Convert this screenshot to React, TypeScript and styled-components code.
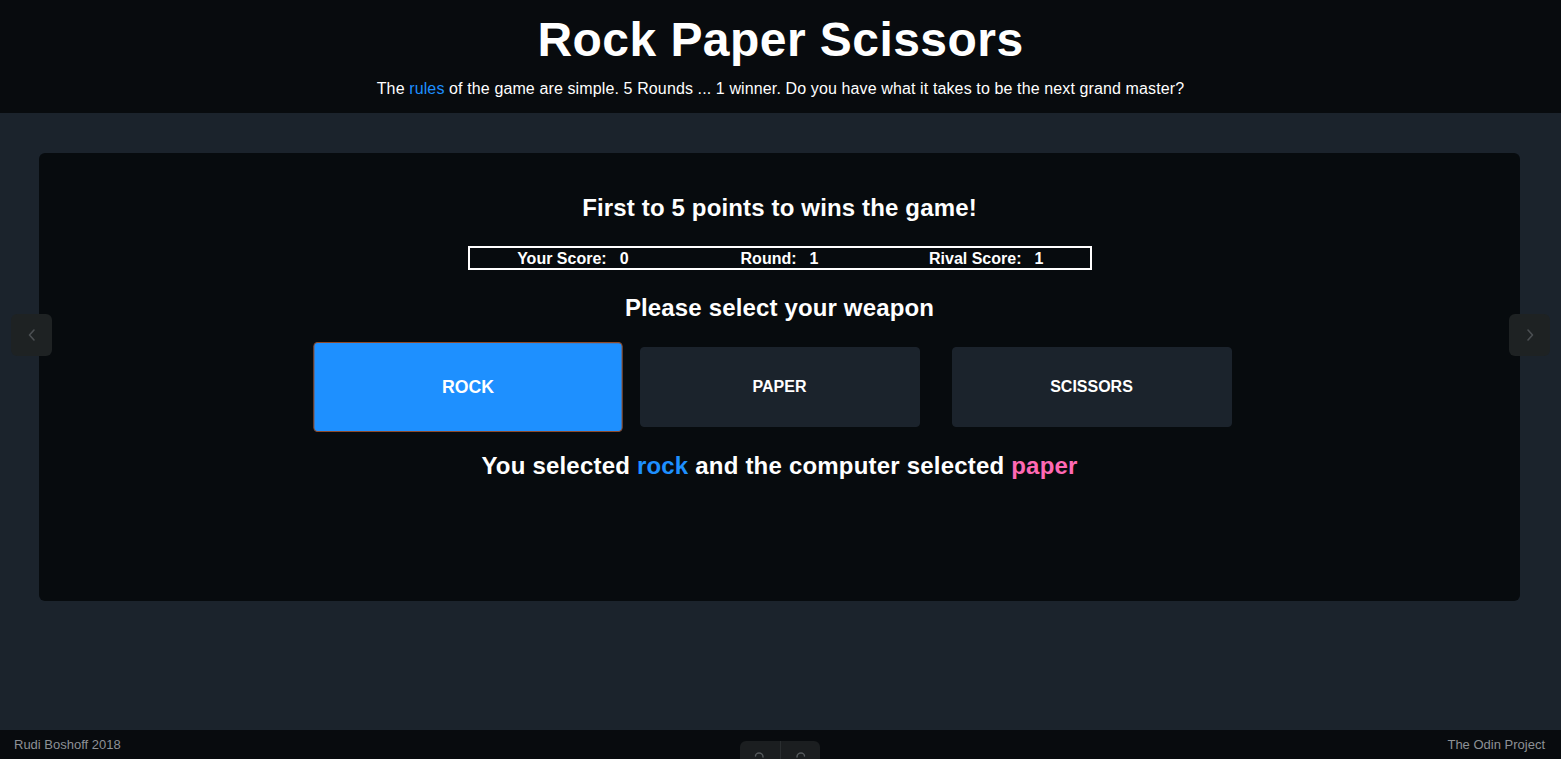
import React from "react";
import styled, { createGlobalStyle } from "styled-components";

const Global = createGlobalStyle`
  html, body { margin: 0; padding: 0; }
  body {
    background: #1b232c;
    font-family: "Liberation Sans", Arial, sans-serif;
    color: #ffffff;
  }
`;

const Page = styled.div`
  min-height: 100vh;
  display: flex;
  flex-direction: column;
  position: relative;
  overflow: hidden;
`;

const Header = styled.header`
  background: #080b0e;
  padding: 14px 0 14px;
  text-align: center;
`;

const Title = styled.h1`
  margin: 0;
  font-size: 48px;
  line-height: 52px;
  font-weight: 700;
  letter-spacing: 0.45px;
  color: #ffffff;
`;

const Lead = styled.p`
  margin: 13px 0 0;
  font-size: 16px;
  line-height: 20px;
  letter-spacing: 0.12px;
  color: #ffffff;
`;

const Link = styled.a`
  color: #1e90ff;
  text-decoration: none;
`;

const Main = styled.main`
  flex: 1;
  padding-top: 40px;
`;

const Card = styled.section`
  width: 1481px;
  margin: 0 0 0 39px;
  height: 448px;
  box-sizing: border-box;
  background: #070b0e;
  border-radius: 6px;
  padding-top: 41px;
  display: flex;
  flex-direction: column;
  align-items: center;
`;

const Heading = styled.h2<{ $mt?: number }>`
  margin: ${(p) => p.$mt ?? 0}px 0 0;
  font-size: 24px;
  line-height: 28px;
  font-weight: 700;
  letter-spacing: 0.15px;
  color: #ffffff;
`;

const ScoreBoard = styled.div`
  margin-top: 24px;
  width: 624px;
  box-sizing: border-box;
  border: 2px solid #ffffff;
  display: flex;
  height: 24px;
  align-items: center;
`;

const ScoreCell = styled.div`
  flex: 1;
  text-align: center;
  font-size: 16px;
  font-weight: 700;
  line-height: 19px;
`;

const ScoreValue = styled.span`
  margin-left: 13px;
`;

const Weapons = styled.div`
  margin-top: 25px;
  display: flex;
  gap: 32px;
`;

const Weapon = styled.button<{ $active?: boolean }>`
  width: 280px;
  height: 80px;
  border-radius: 4px;
  border: 1px solid ${(p) => (p.$active ? "#8e4a2a" : "#1b232c")};
  background: ${(p) => (p.$active ? "#1e90ff" : "#1b232c")};
  color: #ffffff;
  font-family: "Liberation Sans", Arial, sans-serif;
  font-size: 16px;
  font-weight: 700;
  cursor: pointer;
  transform: ${(p) => (p.$active ? "scale(1.105, 1.125)" : "none")};
`;

const Result = styled.h2`
  margin: 25px 0 0;
  font-size: 24px;
  line-height: 28px;
  font-weight: 700;
  letter-spacing: 0.2px;
`;

const Pick = styled.span<{ $color: string }>`
  color: ${(p) => p.$color};
`;

const SideArrow = styled.button<{ $side: "left" | "right" }>`
  position: absolute;
  top: 314px;
  ${(p) => (p.$side === "left" ? "left: 11px;" : "right: 11px;")}
  width: 41px;
  height: 42px;
  border: none;
  border-radius: 6px;
  background: #1e2223;
  display: flex;
  align-items: center;
  justify-content: center;
  padding: 0;
`;

const Footer = styled.footer`
  background: #080b0e;
  height: 29px;
  display: flex;
  align-items: center;
  justify-content: space-between;
  padding: 0 16px 0 14px;
  font-size: 13px;
  color: #8d9196;
`;

const Dock = styled.div`
  position: absolute;
  left: 740px;
  top: 741px;
  width: 80px;
  height: 30px;
  display: flex;
  background: #1b1e20;
  border-radius: 6px;
  overflow: hidden;
`;

const DockButton = styled.div<{ $divider?: boolean }>`
  flex: 1;
  display: flex;
  justify-content: center;
  padding-top: 10px;
  border-right: ${(p) => (p.$divider ? "1px solid #2a2e30" : "none")};
`;

const Chevron = ({ dir }: { dir: "left" | "right" }) => (
  <svg width="12" height="14" viewBox="0 0 12 14">
    <path
      d={dir === "left" ? "M8 2 L3.5 7 L8 12" : "M4 2 L8.5 7 L4 12"}
      fill="none"
      stroke="#4b4f52"
      strokeWidth="1.6"
      strokeLinecap="round"
      strokeLinejoin="round"
    />
  </svg>
);

const Undo = ({ flip }: { flip?: boolean }) => (
  <svg width="14" height="14" viewBox="0 0 14 14" style={flip ? { transform: "scaleX(-1)" } : undefined}>
    <path d="M10 6 C10 3.5 8 2 6 2 C4 2 2.5 3.5 2.5 5" fill="none" stroke="#55595c" strokeWidth="1.5" strokeLinecap="round" />
  </svg>
);

export default function App() {
  return (
    <Page>
      <Global />
      <Header>
        <Title>Rock Paper Scissors</Title>
        <Lead>
          The <Link href="#">rules</Link> of the game are simple. 5 Rounds ... 1 winner. Do you have what it takes to be the next grand master?
        </Lead>
      </Header>
      <Main>
        <Card>
          <Heading>First to 5 points to wins the game!</Heading>
          <ScoreBoard>
            <ScoreCell>
              Your Score:<ScoreValue>0</ScoreValue>
            </ScoreCell>
            <ScoreCell>
              Round:<ScoreValue>1</ScoreValue>
            </ScoreCell>
            <ScoreCell>
              Rival Score:<ScoreValue>1</ScoreValue>
            </ScoreCell>
          </ScoreBoard>
          <Heading $mt={24}>Please select your weapon</Heading>
          <Weapons>
            <Weapon $active>ROCK</Weapon>
            <Weapon>PAPER</Weapon>
            <Weapon>SCISSORS</Weapon>
          </Weapons>
          <Result>
            You selected <Pick $color="#1e90ff">rock</Pick> and the computer selected{" "}
            <Pick $color="#ff69b4">paper</Pick>
          </Result>
        </Card>
      </Main>
      <SideArrow $side="left" aria-label="previous">
        <Chevron dir="left" />
      </SideArrow>
      <SideArrow $side="right" aria-label="next">
        <Chevron dir="right" />
      </SideArrow>
      <Footer>
        <span>Rudi Boshoff 2018</span>
        <span>The Odin Project</span>
      </Footer>
      <Dock>
        <DockButton $divider>
          <Undo />
        </DockButton>
        <DockButton>
          <Undo flip />
        </DockButton>
      </Dock>
    </Page>
  );
}
